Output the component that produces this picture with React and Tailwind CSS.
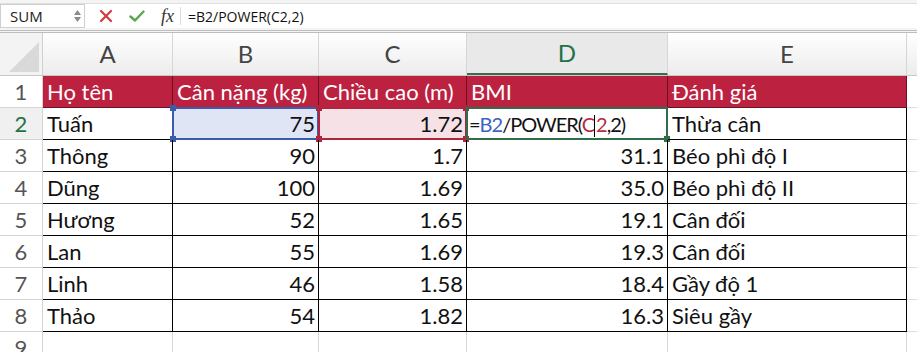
import React from "react";

const rows = [
  ["Tuấn", "75", "1.72", "", "Thừa cân"],
  ["Thông", "90", "1.7", "31.1", "Béo phì độ I"],
  ["Dũng", "100", "1.69", "35.0", "Béo phì độ II"],
  ["Hương", "52", "1.65", "19.1", "Cân đối"],
  ["Lan", "55", "1.69", "19.3", "Cân đối"],
  ["Linh", "46", "1.58", "18.4", "Gầy độ 1"],
  ["Thảo", "54", "1.82", "16.3", "Siêu gầy"],
];

const headers = ["Họ tên", "Cân nặng (kg)", "Chiều cao (m)", "BMI", "Đánh giá"];
const widths = ["w-[130px]", "w-[146px]", "w-[148px]", "w-[201px]", "w-[239px]"];
const letters = ["A", "B", "C", "D", "E"];

const font = { fontFamily: "Lato, 'Open Sans', sans-serif" };

// small square handle on a selection corner
const Handle = ({ pos, color }) => (
  <span className={`absolute w-[6px] h-[6px] ${pos} ${color}`} />
);

const RowHeader = ({ n, active }) => (
  <div
    className={`w-[43px] shrink-0 flex items-center justify-center border-r border-b border-[#d4d4d4] text-[22px] ${
      active ? "text-[#217346] bg-[#f0f0f0]" : "text-[#555] bg-white"
    }`}
  >
    {n}
  </div>
);

export default function App() {
  return (
    <div className="w-[917px] h-[352px] overflow-hidden bg-white" style={font}>
      {/* Formula bar */}
      <div className="h-[33px] bg-[#f4f4f4] pt-[3px] border-b-[3px] border-double border-[#bdbdbd]">
        <div className="h-[25px] flex items-center bg-white border-t border-[#e0e0e0]">
          <div className="w-[85px] h-full flex items-center justify-between pl-[9px] pr-[3px] border border-[#cfcfcf] bg-white">
            <span className="text-[15px] text-[#222]" style={{ fontFamily: "'Open Sans', sans-serif" }}>SUM</span>
            <div className="flex flex-col items-center gap-[2px]">
              <svg width="7" height="5" viewBox="0 0 7 5"><path d="M3.5 0L7 5H0z" fill="#8a8a8a" /></svg>
              <svg width="7" height="5" viewBox="0 0 7 5"><path d="M0 0h7L3.5 5z" fill="#8a8a8a" /></svg>
            </div>
          </div>
          <div className="flex items-center pl-[14px] gap-[16px] pr-[6px] border-r border-[#ddd] h-[18px]">
            <svg width="14" height="14" viewBox="0 0 14 14">
              <path d="M2 2L12 12M12 2L2 12" stroke="#d23a43" strokeWidth="2.2" strokeLinecap="round" />
            </svg>
            <svg width="16" height="14" viewBox="0 0 16 14">
              <path d="M1.5 7.5L6 11.5L14.5 2.5" stroke="#5aa550" strokeWidth="2.4" fill="none" strokeLinecap="round" strokeLinejoin="round" />
            </svg>
            <span className="italic text-[18px] text-[#333] leading-none" style={{ fontFamily: "'Liberation Serif', serif" }}>
              fx
            </span>
          </div>
          <span className="pl-[7px] text-[14px] text-[#111]" style={{ fontFamily: "'Open Sans', sans-serif" }}>
            =B2/POWER(C2,2)
          </span>
        </div>
      </div>

      {/* Column headers */}
      <div className="flex h-[43px] bg-gradient-to-b from-white to-[#ececec] border-b border-[#c8c8c8]">
        <div className="w-[43px] shrink-0 relative border-r border-[#d0d0d0] bg-[#f3f3f3]">
          <svg className="absolute right-[3px] bottom-[3px]" width="30" height="30" viewBox="0 0 30 30">
            <path d="M30 0V30H0z" fill="#d9d9d9" />
          </svg>
        </div>
        {letters.map((l, i) => (
          <div
            key={l}
            className={`${widths[i]} shrink-0 flex items-center justify-center border-r border-[#d6d6d6] text-[24px] ${
              l === "D" ? "bg-[#e9e9e9] text-[#217346] border-b-2 border-b-[#3d6b4f]" : "text-[#444]"
            }`}
          >
            {l}
          </div>
        ))}
        <div className="flex-1" />
      </div>

      {/* Row 1: table header */}
      <div className="flex h-[32px]">
        <RowHeader n={1} />
        {headers.map((h, i) => (
          <div
            key={h}
            className={`${widths[i]} shrink-0 flex items-center pl-[4px] bg-[#bd2140] text-white text-[22px] border-r border-b border-[#6a1223] whitespace-nowrap overflow-hidden`}
          >
            {h}
          </div>
        ))}
        <div className="flex-1 border-b border-[#ddd]" />
      </div>

      {/* Data rows */}
      {rows.map((r, ri) => {
        const rowNum = ri + 2;
        const active = rowNum === 2;
        return (
          <div key={rowNum} className="flex h-[32px]">
            <RowHeader n={rowNum} active={active} />
            {r.map((v, ci) => {
              const numeric = ci >= 1 && ci <= 3;
              let extra = "";
              if (active && ci === 1) extra = "bg-[#dfe5f4]";
              if (active && ci === 2) extra = "bg-[#f6e2e6]";
              return (
                <div
                  key={ci}
                  className={`${widths[ci]} shrink-0 relative flex items-center text-[22px] text-[#111] border-r border-b border-black whitespace-nowrap ${
                    numeric ? "justify-end pr-[3px]" : "pl-[4px]"
                  } ${extra}`}
                >
                  {active && ci === 3 ? (
                    <span className="pl-[2px] w-full text-[20px] tracking-[-1px]">
                      =<span className="text-[#3a63c4]">B2</span>/POWER(
                      <span className="text-[#b82a3e]">C</span>
                      <span className="inline-block w-[1px] h-[22px] bg-black align-middle mr-[1px]" />
                      <span className="text-[#b82a3e]">2</span>,2)
                    </span>
                  ) : (
                    v
                  )}
                  {active && ci === 1 && (
                    <div className="absolute -left-[1px] -top-[1px] -right-[1px] -bottom-[1px] border-2 border-[#3a5cab] pointer-events-none">
                      <Handle pos="-left-[4px] -top-[4px]" color="bg-[#3a5cab]" />
                      <Handle pos="-left-[4px] -bottom-[4px]" color="bg-[#3a5cab]" />
                    </div>
                  )}
                  {active && ci === 2 && (
                    <div className="absolute -left-[1px] -top-[1px] -right-[1px] -bottom-[1px] border-2 border-[#ae2540] pointer-events-none">
                      <Handle pos="-left-[4px] -top-[4px]" color="bg-[#ae2540]" />
                      <Handle pos="-right-[4px] -top-[4px]" color="bg-[#ae2540]" />
                      <Handle pos="-left-[4px] -bottom-[4px]" color="bg-[#ae2540]" />
                      <Handle pos="-right-[4px] -bottom-[4px]" color="bg-[#ae2540]" />
                    </div>
                  )}
                  {active && ci === 3 && (
                    <div className="absolute -left-[1px] -top-[1px] -right-[1px] -bottom-[1px] border-2 border-[#2f6e48] pointer-events-none">
                      <Handle pos="-right-[4px] -bottom-[4px]" color="bg-[#2f6e48]" />
                    </div>
                  )}
                </div>
              );
            })}
            <div className="flex-1 border-b border-[#ddd]" />
          </div>
        );
      })}

      {/* Row 9 */}
      <div className="flex h-[32px]">
        <RowHeader n={9} />
        {widths.map((w, i) => (
          <div key={i} className={`${w} shrink-0 border-r border-b border-[#d8d8d8]`} />
        ))}
        <div className="flex-1 border-b border-[#ddd]" />
      </div>
    </div>
  );
}
